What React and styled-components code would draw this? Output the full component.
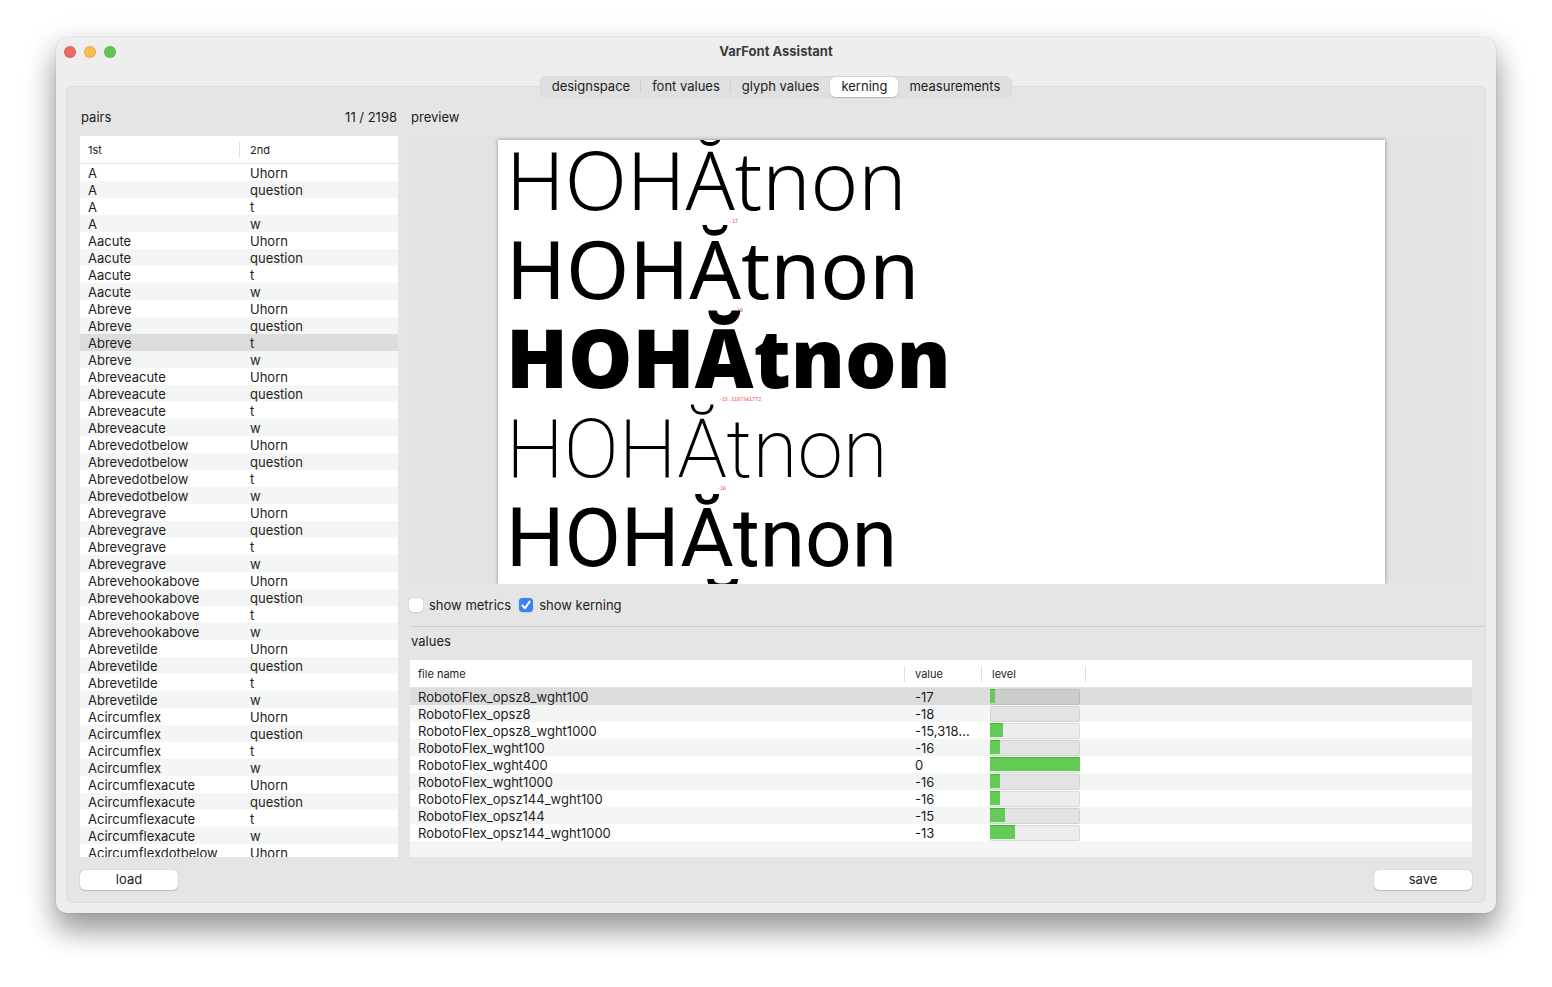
import React, { useState } from "react";
import styled, { createGlobalStyle } from "styled-components";

const GlobalStyle = createGlobalStyle`
  * { box-sizing: border-box; }
  body {
    margin: 0;
    background: #fff;
    color: #1c1c1c;
    font: 13px/17px Inter, "Liberation Sans", sans-serif;
  }
`;

const Desktop = styled.div`
  display: flex;
  height: 100vh;
  min-height: 600px;
  padding: 38px 56px 74px;
  overflow: hidden;
`;

const Window = styled.main`
  flex: 1;
  min-width: 0;
  display: flex;
  flex-direction: column;
  padding: 0 10px 10px;
  border-radius: 10px;
  background: #eeeeee;
  box-shadow: 0 0 1px rgba(0, 0, 0, 0.45), 0 18px 28px rgba(0, 0, 0, 0.32), 0 8px 36px rgba(0, 0, 0, 0.16),
    inset 0 1px 0 #f6f6f6;
`;

const TitleBar = styled.header`
  display: grid;
  grid-template-columns: 1fr auto 1fr;
  align-items: center;
  height: 28px;
`;

const Lights = styled.div`
  display: flex;
  gap: 8px;
  margin-left: -2px;
`;

const Light = styled.button`
  width: 12px;
  height: 12px;
  padding: 0;
  border: 1px solid rgba(0, 0, 0, 0.08);
  border-radius: 50%;
  background: ${(p) => p.$color};
`;

const Title = styled.h1`
  margin: 0;
  padding-bottom: 2px;
  font-size: 13px;
  font-weight: 700;
  color: #3a3a3a;
`;

const TabBar = styled.div`
  position: relative;
  align-self: center;
  display: flex;
  height: 22px;
  margin: 10px 0 -12px;
  border: 1px solid #dadada;
  border-radius: 6px;
  background: #e0e0e0;
`;

const Tab = styled.button`
  position: relative;
  height: 20px;
  padding: 0 11px 2px;
  border: 0;
  border-radius: 5px;
  font: inherit;
  color: #1c1c1c;
  background: ${(p) => (p.$active ? "#fff" : "transparent")};
  box-shadow: ${(p) => (p.$active ? "0 0 1px rgba(0,0,0,.3), 0 1px 1px rgba(0,0,0,.15)" : "none")};
  &::after {
    content: "";
    display: ${(p) => (p.$divided ? "block" : "none")};
    position: absolute;
    right: 0;
    top: 4px;
    width: 1px;
    height: 12px;
    background: #cfcfcf;
  }
`;

const Panel = styled.section`
  flex: 1;
  min-height: 0;
  display: flex;
  flex-direction: column;
  padding: 20px 0 12px 13px;
  border: 1px solid #dedede;
  border-radius: 5px;
  background: #e5e5e5;
`;

const Columns = styled.div`
  flex: 1;
  min-height: 0;
  display: grid;
  grid-template-columns: 318px 1fr;
  column-gap: 12px;
`;

const Column = styled.div`
  display: flex;
  flex-direction: column;
  min-width: 0;
  min-height: 0;
`;

const Caption = styled.div`
  display: flex;
  align-items: flex-start;
  justify-content: space-between;
  height: ${(p) => (p.$tall ? 33 : 29)}px;
  padding: ${(p) => (p.$tall ? 6 : 2)}px 1px 0;
`;

const Heading = styled.h2`
  margin: 0;
  font-size: 13px;
  font-weight: 400;
`;

const TableFrame = styled.div`
  flex: ${(p) => (p.$height ? "none" : "1")};
  height: ${(p) => (p.$height ? p.$height + "px" : "auto")};
  min-height: 0;
  margin-right: ${(p) => (p.$inset ? "13px" : "0")};
  overflow: hidden;
  background: ${(p) => (p.$inset ? "#f4f5f5" : "#fff")};
`;

const Table = styled.table`
  width: 100%;
  table-layout: fixed;
  border-collapse: separate;
  border-spacing: 0;
`;

const HeadCell = styled.th`
  position: relative;
  width: ${(p) => (p.$width ? p.$width + "px" : "auto")};
  height: 28px;
  padding: 2px 0 0 ${(p) => p.$pad || 8}px;
  border-bottom: 1px solid #e4e4e4;
  background: #fff;
  text-align: left;
  font-size: 11px;
  font-weight: 400;
  &::after {
    content: "";
    display: ${(p) => (p.$divided ? "block" : "none")};
    position: absolute;
    right: 0;
    top: 6px;
    width: 1px;
    height: 16px;
    background: #e0e0e0;
  }
`;

const Row = styled.tr`
  background: ${(p) => (p.$selected ? "#dcdcdc" : "#fff")};
  &:nth-child(even) {
    background: ${(p) => (p.$selected ? "#dcdcdc" : "#f4f5f5")};
  }
`;

const Cell = styled.td`
  height: 17px;
  padding: ${(p) => (p.$meter ? "1px 0 0 8px" : `2px 8px 0 ${p.$pad || 8}px`)};
  overflow: hidden;
  white-space: nowrap;
  text-overflow: ellipsis;
  line-height: ${(p) => (p.$meter ? "0" : "15px")};
`;

const Meter = styled.div`
  width: 90px;
  height: 16px;
  border: 1px solid rgba(0, 0, 0, 0.08);
  border-radius: 2px;
  background: rgba(0, 0, 0, 0.07);
`;

const MeterFill = styled.div`
  height: 14px;
  margin: -1px;
  border-top: 1px solid #41b62b;
  background: #64cb56;
`;

const Preview = styled.div`
  flex: 1;
  min-height: 0;
  margin-right: 13px;
  padding: 4px 87px 0 88px;
  overflow: hidden;
  background: #e3e3e3;
`;

const Paper = styled.div`
  height: 100%;
  background: #fff;
  box-shadow: 0 0 4px rgba(0, 0, 0, 0.4);
`;

const Specimens = styled.div`
  height: 100%;
  padding: 0 8px;
  overflow: hidden;
`;

const faces = {
  wide: { family: '"Noto Sans"', size: 81, line: 77 },
  heavy: { family: '"Open Sans"', size: 81, line: 77 },
  normal: { family: "Roboto", size: 82, line: 84 },
};

const Specimen = styled.p`
  position: relative;
  height: 89px;
  margin: 0;
  white-space: nowrap;
  color: #000;
  font-family: ${(p) => faces[p.$face].family}, sans-serif;
  font-weight: ${(p) => p.$weight};
  font-size: ${(p) => faces[p.$face].size}px;
  line-height: ${(p) => faces[p.$face].line}px;
`;

const KernValue = styled.span`
  position: absolute;
  left: ${(p) => p.$x}px;
  top: 78px;
  color: #f0443a;
  font: 5px/6px "DejaVu Sans Mono", monospace;
`;

const Options = styled.div`
  display: flex;
  align-items: center;
  gap: 9px;
  height: 42px;
`;

const Option = styled.label`
  display: flex;
  align-items: center;
  gap: 6px;
`;

const Checkbox = styled.input`
  appearance: none;
  width: 14px;
  height: 14px;
  margin: 0 0 0 -1px;
  border-radius: 4px;
  background: #fff;
  box-shadow: 0 0 1px rgba(0, 0, 0, 0.35), 0 1px 1px rgba(0, 0, 0, 0.08);
  &:checked {
    background: #3b82f7;
  }
`;

const CheckWrap = styled.span`
  position: relative;
  display: flex;
  svg {
    position: absolute;
    left: -1px;
    top: 0;
    pointer-events: none;
  }
`;

const Divider = styled.hr`
  width: 100%;
  height: 1px;
  margin: 0;
  border: 0;
  background: #cecece;
`;

const Footer = styled.footer`
  display: flex;
  justify-content: space-between;
  padding: 13px 13px 0 0;
`;

const PushButton = styled.button`
  width: 98px;
  height: 20px;
  padding: 0 0 2px;
  border: 0;
  border-radius: 5px;
  background: #fff;
  color: #1c1c1c;
  font: inherit;
  box-shadow: 0 0 1px rgba(0, 0, 0, 0.35), 0 1px 1px rgba(0, 0, 0, 0.15);
`;

const tabs = ["designspace", "font values", "glyph values", "kerning", "measurements"];

const full = ["Uhorn", "question", "t", "w"];
const groups = [
  ["A", full],
  ["Aacute", full],
  ["Abreve", full],
  ["Abreveacute", full],
  ["Abrevedotbelow", full],
  ["Abrevegrave", full],
  ["Abrevehookabove", full],
  ["Abrevetilde", full],
  ["Acircumflex", full],
  ["Acircumflexacute", full],
  ["Acircumflexdotbelow", ["Uhorn"]],
];
const pairs = groups.flatMap(([first, seconds]) => seconds.map((second) => [first, second]));

const values = [
  ["RobotoFlex_opsz8_wght100", "-17", 5],
  ["RobotoFlex_opsz8", "-18", 0],
  ["RobotoFlex_opsz8_wght1000", "-15,3187341772", 13],
  ["RobotoFlex_wght100", "-16", 10],
  ["RobotoFlex_wght400", "0", 90],
  ["RobotoFlex_wght1000", "-16", 10],
  ["RobotoFlex_opsz144_wght100", "-16", 10],
  ["RobotoFlex_opsz144", "-15", 15],
  ["RobotoFlex_opsz144_wght1000", "-13", 25],
];

const specimens = [
  { face: "wide", weight: 300, kern: "-17", x: 223 },
  { face: "wide", weight: 400, kern: "-18", x: 228 },
  { face: "heavy", weight: 800, kern: "-15.3187341772", x: 213 },
  { face: "normal", weight: 200, kern: "-16", x: 211 },
  { face: "normal", weight: 400 },
  { face: "heavy", weight: 700 },
];

function Check({ label, checked, onChange }) {
  return (
    <Option>
      <CheckWrap>
        <Checkbox type="checkbox" checked={checked} onChange={onChange} />
        {checked && (
          <svg width="14" height="14" viewBox="0 0 14 14" fill="none" stroke="#fff" strokeWidth="2" strokeLinecap="round" strokeLinejoin="round">
            <path d="M3.4 7.4 6 10.2 10.6 3.6" />
          </svg>
        )}
      </CheckWrap>
      {label}
    </Option>
  );
}

export default function App() {
  const [tab, setTab] = useState(3);
  const [metrics, setMetrics] = useState(false);
  const [kerning, setKerning] = useState(true);
  const [pair, setPair] = useState(10);
  return (
    <Desktop>
      <GlobalStyle />
      <Window>
        <TitleBar>
          <Lights>
            <Light $color="#ec6b60" aria-label="Close" />
            <Light $color="#f5be4f" aria-label="Minimize" />
            <Light $color="#61c554" aria-label="Zoom" />
          </Lights>
          <Title>VarFont Assistant</Title>
        </TitleBar>
        <TabBar role="tablist">
          {tabs.map((name, i) => (
            <Tab
              key={name}
              role="tab"
              aria-selected={i === tab}
              $active={i === tab}
              $divided={i < tabs.length - 1 && i !== tab && i + 1 !== tab}
              onClick={() => setTab(i)}
            >
              {name}
            </Tab>
          ))}
        </TabBar>
        <Panel>
          <Columns>
            <Column>
              <Caption>
                <Heading>pairs</Heading>
                <span>{pair + 1} / 2198</span>
              </Caption>
              <TableFrame>
                <Table>
                  <thead>
                    <tr>
                      <HeadCell $width={160} $divided>1st</HeadCell>
                      <HeadCell $pad={10}>2nd</HeadCell>
                    </tr>
                  </thead>
                  <tbody>
                    {pairs.map(([first, second], i) => (
                      <Row key={i} $selected={i === pair} onClick={() => setPair(i)}>
                        <Cell>{first}</Cell>
                        <Cell $pad={10}>{second}</Cell>
                      </Row>
                    ))}
                  </tbody>
                </Table>
              </TableFrame>
            </Column>
            <Column>
              <Caption>
                <Heading>preview</Heading>
              </Caption>
              <Preview>
                <Paper>
                  <Specimens>
                    {specimens.map((s, i) => (
                      <Specimen key={i} $face={s.face} $weight={s.weight}>
                        {kerning && s.kern && <KernValue $x={s.x}>{s.kern}</KernValue>}
                        HOHĂtnon
                      </Specimen>
                    ))}
                  </Specimens>
                </Paper>
              </Preview>
              <Options>
                <Check label="show metrics" checked={metrics} onChange={() => setMetrics(!metrics)} />
                <Check label="show kerning" checked={kerning} onChange={() => setKerning(!kerning)} />
              </Options>
              <Divider />
              <Caption $tall>
                <Heading>values</Heading>
              </Caption>
              <TableFrame $height={197} $inset>
                <Table>
                  <thead>
                    <tr>
                      <HeadCell $width={495} $divided>file name</HeadCell>
                      <HeadCell $width={77} $pad={10} $divided>value</HeadCell>
                      <HeadCell $width={104} $pad={10} $divided>level</HeadCell>
                      <HeadCell />
                    </tr>
                  </thead>
                  <tbody>
                    {values.map(([file, value, level], i) => (
                      <Row key={file} $selected={i === 0}>
                        <Cell>{file}</Cell>
                        <Cell $pad={10}>{value}</Cell>
                        <Cell $meter>
                          <Meter>{level > 0 && <MeterFill style={{ width: level }} />}</Meter>
                        </Cell>
                        <Cell />
                      </Row>
                    ))}
                  </tbody>
                </Table>
              </TableFrame>
            </Column>
          </Columns>
          <Footer>
            <PushButton>load</PushButton>
            <PushButton>save</PushButton>
          </Footer>
        </Panel>
      </Window>
    </Desktop>
  );
}
